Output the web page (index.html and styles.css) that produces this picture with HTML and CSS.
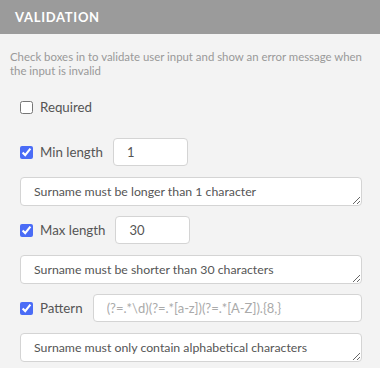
FILE: index.html
```html
<!DOCTYPE html>
<html lang="en">
<head>
    <meta charset="UTF-8">
    <meta name="viewport" content="width=device-width, initial-scale=1.0">
    <title>Validation</title>
    <link rel="stylesheet" href="styles.css">
</head>
<body>
    <div class="panel">
        <div class="panel-header">VALIDATION</div>
        <div class="panel-body">
            <p class="hint">Check boxes in to validate user input and show an error message when the input is invalid</p>

            <div class="rule rule-single">
                <label class="check"><input type="checkbox"> Required</label>
            </div>

            <div class="rule">
                <label class="check"><input type="checkbox" checked> Min length</label>
                <input type="text" class="num" value="1">
            </div>
            <textarea class="message" rows="1">Surname must be longer than 1 character</textarea>

            <div class="rule">
                <label class="check"><input type="checkbox" checked> Max length</label>
                <input type="text" class="num" value="30">
            </div>
            <textarea class="message" rows="1">Surname must be shorter than 30 characters</textarea>

            <div class="rule">
                <label class="check"><input type="checkbox" checked> Pattern</label>
                <input type="text" class="pattern" placeholder="(?=.*\d)(?=.*[a-z])(?=.*[A-Z]).{8,}">
            </div>
            <textarea class="message" rows="1">Surname must only contain alphabetical characters</textarea>
        </div>
    </div>
</body>
</html>
```

FILE: styles.css
```css
body {
    margin: 0;
    font-family: Lato, "Open Sans", sans-serif;
    background-color: #f3f3f3;
    color: #555;
}

.panel-header {
    height: 34px;
    line-height: 34px;
    padding-left: 15px;
    background-color: #9b9b9b;
    color: #fff;
    font-size: 13px;
    font-weight: 700;
    letter-spacing: 0.7px;
}

.panel-body {
    padding: 16px 18px 0 20px;
}

.hint {
    margin: 0 0 15px -10px;
    font-size: 11.4px;
    line-height: 14px;
    color: #999;
}

.rule {
    display: flex;
    align-items: center;
    height: 28px;
    margin-bottom: 11px;
}

.rule-single {
    margin-bottom: 17px;
}

.check {
    display: flex;
    align-items: center;
    gap: 7px;
    font-size: 13.3px;
    color: #555;
    margin-right: 10px;
}

.check input {
    width: 13px;
    height: 13px;
    margin: 0;
    accent-color: #4a6cf6;
}

.rule input[type="text"] {
    box-sizing: border-box;
    height: 28px;
    padding: 0 13px;
    border: 1px solid #d4d4d4;
    border-radius: 4px;
    background: #fff;
    font-family: inherit;
    font-size: 13px;
    color: #555;
}

.num {
    width: 75px;
}

.pattern {
    flex: 1;
}

.pattern::placeholder {
    color: #aaa;
}

.message {
    display: block;
    box-sizing: border-box;
    width: 100%;
    height: 29px;
    margin: 0 0 10px;
    padding: 6px 13px;
    border: 1px solid #d4d4d4;
    border-radius: 4px;
    background: #fff;
    font-family: inherit;
    font-size: 12.3px;
    line-height: 15px;
    color: #555;
}
```
